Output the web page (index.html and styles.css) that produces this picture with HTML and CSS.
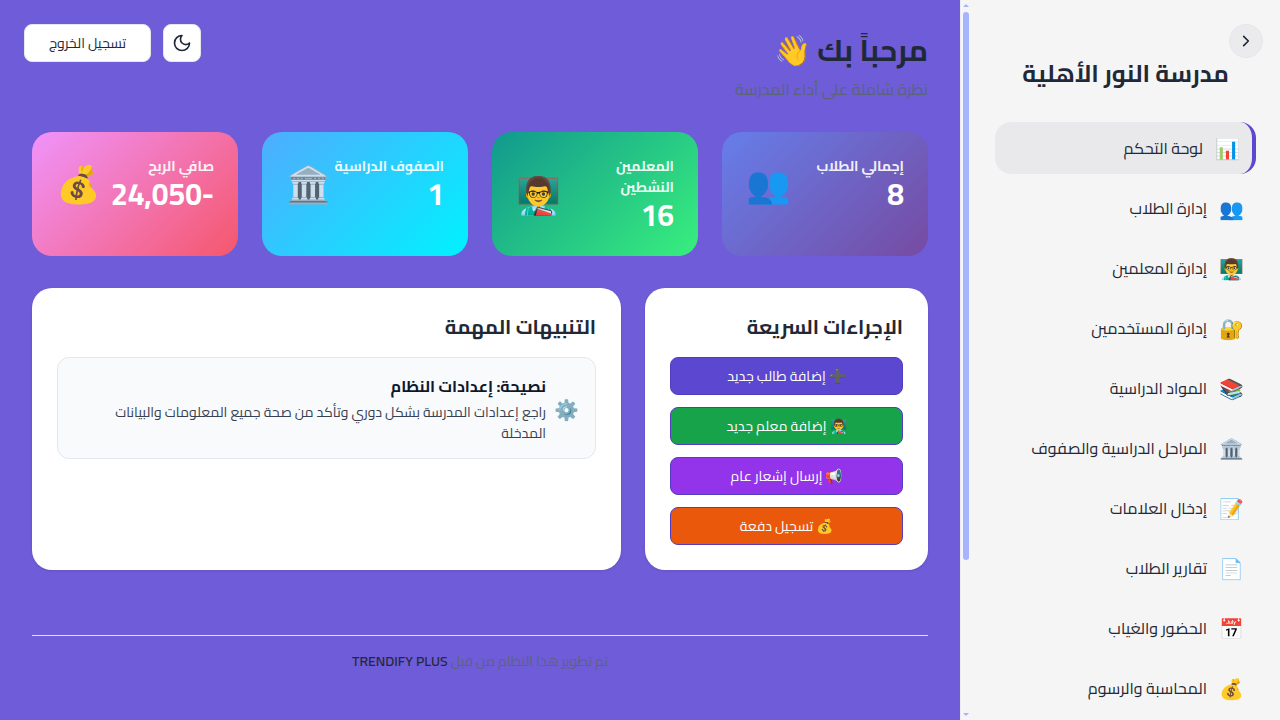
FILE: index.html
```html
<!DOCTYPE html>
<html lang="ar" dir="rtl">
<head>
    <meta charset="UTF-8">
    <meta name="viewport" content="width=device-width, initial-scale=1.0">
    <title>مدرسة النور الأهلية</title>
    <link rel="stylesheet" href="styles.css">
</head>
<body>
    <aside class="sidebar">
        <div class="scrollbar">
            <span class="scroll-arrow scroll-up"></span>
            <span class="scroll-thumb"></span>
            <span class="scroll-arrow scroll-down"></span>
        </div>
        <div class="sidebar-top">
            <button class="collapse-btn" aria-label="طي">
                <svg width="14" height="14" viewBox="0 0 24 24" fill="none" stroke="currentColor" stroke-width="2.8" stroke-linecap="round" stroke-linejoin="round"><path d="M8 4l8 8-8 8"/></svg>
            </button>
        </div>
        <h2 class="school-name">مدرسة النور الأهلية</h2>
        <nav class="nav">
            <a class="nav-item active"><span class="nav-icon">📊</span><span>لوحة التحكم</span></a>
            <a class="nav-item"><span class="nav-icon">👥</span><span>إدارة الطلاب</span></a>
            <a class="nav-item"><span class="nav-icon">👨‍🏫</span><span>إدارة المعلمين</span></a>
            <a class="nav-item"><span class="nav-icon">🔐</span><span>إدارة المستخدمين</span></a>
            <a class="nav-item"><span class="nav-icon">📚</span><span>المواد الدراسية</span></a>
            <a class="nav-item"><span class="nav-icon">🏛️</span><span>المراحل الدراسية والصفوف</span></a>
            <a class="nav-item"><span class="nav-icon">📝</span><span>إدخال العلامات</span></a>
            <a class="nav-item"><span class="nav-icon">📄</span><span>تقارير الطلاب</span></a>
            <a class="nav-item"><span class="nav-icon">📅</span><span>الحضور والغياب</span></a>
            <a class="nav-item"><span class="nav-icon">💰</span><span>المحاسبة والرسوم</span></a>
        </nav>
    </aside>

    <main class="main">
        <header class="page-header">
            <div>
                <h1 class="page-title">مرحباً بك 👋</h1>
                <p class="page-subtitle">نظرة شاملة على أداء المدرسة</p>
            </div>
            <div class="header-actions">
                <button class="icon-btn" aria-label="الوضع الليلي">
                    <svg width="20" height="20" viewBox="0 0 24 24" fill="none" stroke="currentColor" stroke-width="2" stroke-linecap="round" stroke-linejoin="round"><path d="M12 3a6 6 0 0 0 9 9 9 9 0 1 1-9-9Z"/></svg>
                </button>
                <button class="logout-btn">تسجيل الخروج</button>
            </div>
        </header>

        <section class="stats">
            <div class="stat-card stat-blue">
                <div class="stat-row">
                    <div class="stat-text"><div class="stat-label">إجمالي الطلاب</div><div class="stat-value">8</div></div>
                    <div class="stat-icon">👥</div>
                </div>
            </div>
            <div class="stat-card stat-green">
                <div class="stat-row">
                    <div class="stat-text"><div class="stat-label">المعلمين النشطين</div><div class="stat-value">16</div></div>
                    <div class="stat-icon">👨‍🏫</div>
                </div>
            </div>
            <div class="stat-card stat-cyan">
                <div class="stat-row">
                    <div class="stat-text"><div class="stat-label">الصفوف الدراسية</div><div class="stat-value">1</div></div>
                    <div class="stat-icon">🏛️</div>
                </div>
            </div>
            <div class="stat-card stat-pink">
                <div class="stat-row">
                    <div class="stat-text"><div class="stat-label">صافي الربح</div><div class="stat-value">-24,050</div></div>
                    <div class="stat-icon">💰</div>
                </div>
            </div>
        </section>

        <section class="panels">
            <div class="panel">
                <h3 class="panel-title">الإجراءات السريعة</h3>
                <div class="quick-actions">
                    <button class="action-btn action-indigo">➕ إضافة طالب جديد</button>
                    <button class="action-btn action-green">👨‍🏫 إضافة معلم جديد</button>
                    <button class="action-btn action-purple">📢 إرسال إشعار عام</button>
                    <button class="action-btn action-orange">💰 تسجيل دفعة</button>
                </div>
            </div>
            <div class="panel">
                <h3 class="panel-title">التنبيهات المهمة</h3>
                <div class="alert-box">
                    <span class="alert-icon">⚙️</span>
                    <div>
                        <div class="alert-title">نصيحة: إعدادات النظام</div>
                        <p class="alert-text">راجع إعدادات المدرسة بشكل دوري وتأكد من صحة جميع المعلومات والبيانات المدخلة</p>
                    </div>
                </div>
            </div>
        </section>

        <footer class="footer">تم تطوير هذا النظام من قبل <strong>TRENDIFY PLUS</strong></footer>
    </main>
</body>
</html>
```

FILE: styles.css
```css
* {
    box-sizing: border-box;
}

html, body {
    height: 100%;
}

body {
    margin: 0;
    display: flex;
    overflow: hidden;
    font-family: "Cairo", "Noto Sans", "DejaVu Sans", sans-serif;
    background-color: #6f5cd8;
    color: #1f2937;
}

button {
    font-family: inherit;
    cursor: pointer;
}

.sidebar {
    position: relative;
    width: 320px;
    height: 720px;
    flex-shrink: 0;
    overflow: hidden;
    padding: 24px 24px 0 34px;
    background-color: #f5f5f5;
    border-left: 1px solid #ebebf0;
}

/* the scrollbar is drawn by hand, the browser hides the real one */
.scrollbar {
    position: absolute;
    top: 0;
    bottom: 0;
    left: 2px;
    width: 6px;
}

.scroll-thumb {
    position: absolute;
    top: 12px;
    left: 0;
    width: 6px;
    height: 548px;
    border-radius: 3px;
    background-color: #a5b4fc;
}

.scroll-arrow {
    position: absolute;
    left: 0;
    width: 0;
    height: 0;
    border-left: 3px solid transparent;
    border-right: 3px solid transparent;
}

.scroll-up {
    top: 4px;
    border-bottom: 3px solid #a5b4fc;
}

.scroll-down {
    bottom: 4px;
    border-top: 3px solid #a5b4fc;
}

.sidebar-top {
    display: flex;
    margin-right: -7px;
}

.collapse-btn {
    width: 34px;
    height: 34px;
    padding: 0;
    display: flex;
    align-items: center;
    justify-content: center;
    border: 1px solid #e5e7eb;
    border-radius: 50%;
    background-color: #ebebed;
    color: #1f2937;
}

.school-name {
    margin: 0 0 32px;
    font-size: 24px;
    line-height: 32px;
    font-weight: 700;
    text-align: center;
    color: #1f2937;
}

.nav {
    display: flex;
    flex-direction: column;
    gap: 8px;
}

.nav-item {
    height: 52px;
    padding: 0 12px;
    display: flex;
    align-items: center;
    gap: 13px;
    border-radius: 16px;
    font-size: 16px;
    color: #1f2937;
}

.nav-item.active {
    background-color: #e9e9eb;
    border-right: 4px solid #5b47d0;
}

.nav-icon {
    width: 24px;
    text-align: center;
    font-size: 20px;
}

.main {
    flex: 1;
    min-width: 0;
    padding: 24px;
}

.page-header {
    display: flex;
    justify-content: space-between;
    align-items: flex-start;
    padding-right: 8px;
    margin-bottom: 31px;
}

.page-title {
    margin: 4px 0 5px;
    font-size: 30px;
    line-height: 44px;
    font-weight: 700;
    color: #1f2937;
}

.page-subtitle {
    margin: 0;
    font-size: 16px;
    line-height: 24px;
    color: #5b6478;
}

.header-actions {
    display: flex;
    gap: 12px;
}

.icon-btn {
    width: 38px;
    height: 38px;
    padding: 0;
    display: flex;
    align-items: center;
    justify-content: center;
    border: 1px solid #e5e7eb;
    border-radius: 8px;
    background-color: #fff;
    color: #1f2937;
}

.logout-btn {
    width: 127px;
    height: 38px;
    border: 1px solid #e5e7eb;
    border-radius: 8px;
    background-color: #fff;
    font-size: 14px;
    color: #1f2937;
}

.stats {
    display: grid;
    grid-template-columns: repeat(4, minmax(0, 1fr));
    gap: 24px;
    margin: 0 8px 32px;
}

.stat-card {
    height: 124px;
    padding: 24px;
    border-radius: 20px;
    color: #fff;
}

.stat-row {
    display: flex;
    justify-content: space-between;
    align-items: center;
}

.stat-blue { background: linear-gradient(135deg, #667eea, #764ba2); }
.stat-green { background: linear-gradient(135deg, #11998e, #38ef7d); }
.stat-cyan { background: linear-gradient(135deg, #4facfe, #00f2fe); }
.stat-pink { background: linear-gradient(135deg, #f093fb, #f5576c); }

.stat-label {
    font-size: 14px;
    line-height: 21px;
    font-weight: 700;
    opacity: 0.9;
}

.stat-value {
    font-size: 30px;
    line-height: 36px;
    font-weight: 700;
    margin-top: -1px;
}

.stat-icon {
    font-size: 36px;
    line-height: 1;
    flex-shrink: 0;
}

.panels {
    display: grid;
    grid-template-columns: 283px minmax(0, 1fr);
    gap: 24px;
    margin: 0 8px 65px;
}

.panel {
    height: 282px;
    padding: 24px 25px;
    border-radius: 20px;
    background-color: #fff;
    box-shadow: 0 1px 3px rgba(0, 0, 0, 0.1);
}

.panel-title {
    margin: 0 0 15px;
    font-size: 20px;
    line-height: 30px;
    font-weight: 700;
    color: #1f2937;
}

.quick-actions {
    display: flex;
    flex-direction: column;
    gap: 12px;
}

.action-btn {
    height: 38px;
    border: 1px solid #4f3ec4;
    border-radius: 8px;
    font-size: 14px;
    color: #fff;
}

.action-indigo { background-color: #5b47d0; }
.action-green { background-color: #16a34a; }
.action-purple { background-color: #9333ea; }
.action-orange { background-color: #ea580c; }

.alert-box {
    padding: 16px 16px 14px;
    display: flex;
    align-items: center;
    gap: 8px;
    border: 1px solid #e2e8f0;
    border-radius: 12px;
    background-color: #f8fafc;
}

.alert-icon {
    font-size: 20px;
    flex-shrink: 0;
}

.alert-title {
    font-size: 16px;
    line-height: 24px;
    margin-bottom: 4px;
    font-weight: 700;
    color: #0f172a;
}

.alert-text {
    margin: 0;
    font-size: 14px;
    line-height: 21px;
    color: #374151;
}

.footer {
    margin: 0 8px;
    padding-top: 16px;
    border-top: 1px solid rgba(255, 255, 255, 0.8);
    text-align: center;
    font-size: 14px;
    line-height: 19px;
    color: #5b6478;
}

.footer strong {
    color: #1f2937;
    font-weight: 600;
}
```
